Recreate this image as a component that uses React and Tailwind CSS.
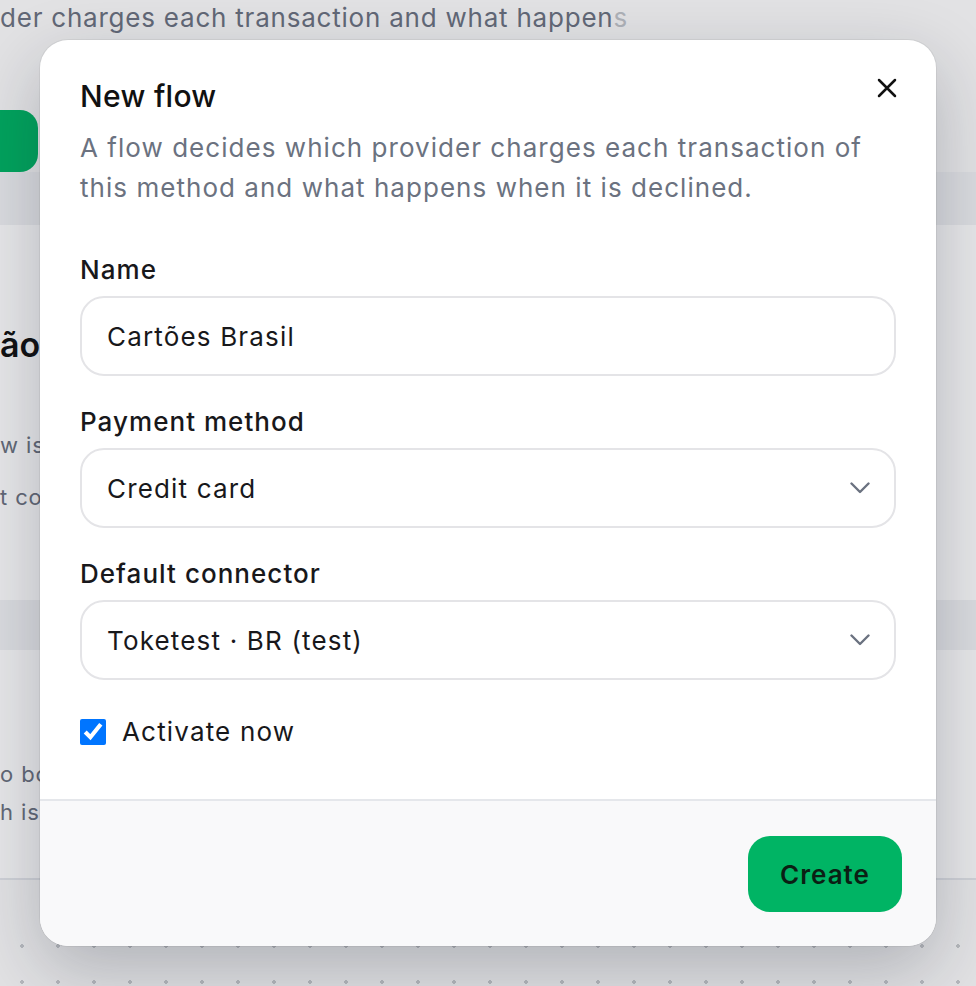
function Field({ label, children }) {
  return (
    <div className="flex flex-col gap-[10px]">
      <label className="text-[26px] leading-8 font-medium tracking-[0.04em] text-[#18181b]">{label}</label>
      {children}
    </div>
  );
}

function SelectBox({ value }) {
  return (
    <div className="flex h-[80px] items-center justify-between rounded-[24px] border-2 border-[#e4e4e7] bg-white pl-[25px] pr-[24px]">
      <span className="text-[26px] tracking-[0.045em] text-[#18181b]">{value}</span>
      <svg width="20" height="12" viewBox="0 0 20 12" fill="none" stroke="#6b7280" strokeWidth="2.4" strokeLinecap="round" strokeLinejoin="round">
        <path d="M1.5 1.5 10 10l8.5-8.5" />
      </svg>
    </div>
  );
}

function Backdrop() {
  return (
    <div className="flex h-full flex-col">
      <p className="whitespace-nowrap text-[26px] leading-9 tracking-[0.03em] text-[#6b7280]">
        der charges each transaction and what happen<span className="opacity-40">s</span>
      </p>
      <div className="mt-[74px] h-[62px] w-[38px] rounded-r-[18px] bg-[#00b464]" />
      <div className="h-[53px] bg-[#f1f2f4]" />
      <div className="flex flex-col bg-white">
        <div className="flex h-[375px] flex-col pt-[100px]">
          <p className="whitespace-nowrap text-[34px] font-semibold leading-10 text-[#111]">ão</p>
          <p className="mt-[66px] whitespace-nowrap text-[22px] leading-7 tracking-[0.04em] text-[#6b7280]">w is</p>
          <p className="mt-[24px] whitespace-nowrap text-[22px] leading-7 tracking-[0.04em] text-[#6b7280]">t con</p>
        </div>
        <div className="h-[50px] bg-[#f1f2f4]" />
        <div className="flex h-[230px] flex-col border-b-2 border-[#e5e7eb] pt-[110px]">
          <p className="whitespace-nowrap text-[22px] leading-7 tracking-[0.04em] text-[#6b7280]">o bo</p>
          <p className="mt-[10px] whitespace-nowrap text-[22px] leading-7 tracking-[0.04em] text-[#6b7280]">h is</p>
        </div>
        <div className="h-[48px] bg-[#fafafa]" />
      </div>
      <div className="flex-1 bg-[radial-gradient(#c9cbcf_1.6px,transparent_1.8px)] bg-[size:36px_36px] bg-[position:4px_0px]" />
    </div>
  );
}

export default function App() {
  return (
    <div className="relative h-screen overflow-hidden bg-[#fafafa] font-['Inter',sans-serif]">
      <Backdrop />

      <div className="absolute inset-0 bg-[#111827]/10 p-10">
        <div className="w-[896px] overflow-hidden rounded-[28px] bg-white shadow-[0_0_0_1px_rgba(0,0,0,0.05),0_24px_70px_rgba(15,23,42,0.24)]">
          <div className="flex flex-col px-10 pb-[53px] pt-[38px]">
            <div className="flex items-start justify-between">
              <h2 className="text-[30px] font-medium leading-9 tracking-[0.01em] text-[#111]">New flow</h2>
              <button className="-mr-px text-[#111]">
                <svg width="20" height="20" viewBox="0 0 20 20" fill="none" stroke="currentColor" strokeWidth="2.5" strokeLinecap="round">
                  <path d="M2 2 18 18M18 2 2 18" />
                </svg>
              </button>
            </div>
            <p className="mt-[14px] text-[26px] leading-10 tracking-[0.04em] text-[#6b7280]">
              A flow decides which provider charges each transaction of this method and what happens when it is declined.
            </p>

            <div className="mt-[46px] flex flex-col gap-[30px]">
              <Field label="Name">
                <div className="flex h-[80px] items-center rounded-[24px] border-2 border-[#e4e4e7] bg-white px-[25px]">
                  <span className="text-[26px] tracking-[0.045em] text-[#18181b]">Cartões Brasil</span>
                </div>
              </Field>
              <Field label="Payment method">
                <SelectBox value="Credit card" />
              </Field>
              <Field label="Default connector">
                <SelectBox value="Toketest · BR (test)" />
              </Field>
            </div>

            <label className="mt-[38px] flex items-center gap-[16px]">
              <input type="checkbox" checked readOnly className="m-0 size-[26px] accent-[#0075ff]" />
              <span className="text-[26px] leading-7 tracking-[0.045em] text-[#18181b]">Activate now</span>
            </label>
          </div>

          <div className="flex justify-end border-t-2 border-[#e5e7eb] bg-[#f9f9fa] pb-[34px] pr-[34px] pt-[35px]">
            <button className="h-[76px] w-[154px] rounded-[22px] bg-[#00b464] text-[26px] font-semibold tracking-[0.04em] text-[#0b1f14]">
              Create
            </button>
          </div>
        </div>
      </div>
    </div>
  );
}
